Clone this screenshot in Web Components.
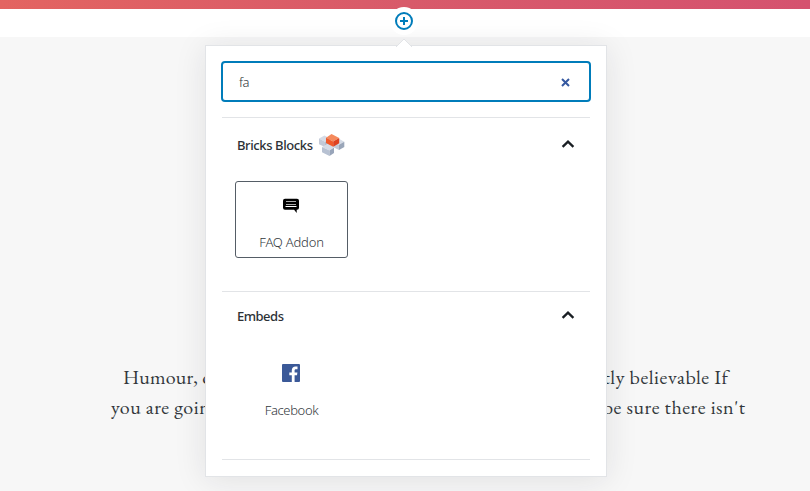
<!DOCTYPE html>
<html lang="en"><head><meta charset="utf-8"><title>Block inserter</title>
<style>html,body{margin:0;width:810px;height:491px;overflow:hidden}</style></head><body>
<editor-page></editor-page>
<script>
const define = (name, html) => customElements.define(name, class extends HTMLElement {
  constructor() {
    super();
    const t = document.createElement('template');
    t.innerHTML = html;
    this.attachShadow({ mode: 'open' }).append(t.content.cloneNode(true));
  }
});

define('insert-button', `<style>:host{display:block;width:28px;height:28px}svg{display:block}</style>
<svg width="28" height="28"><circle cx="14" cy="14" r="14" fill="#fff"/><circle cx="14" cy="14" r="8" fill="none" stroke="#007cba" stroke-width="2"/><path d="M14 10v8M10 14h8" stroke="#007cba" stroke-width="2"/></svg>`);

define('search-field', `<style>:host{display:flex;box-sizing:border-box;height:41px;margin:0 -1px;border:2px solid #007cba;border-radius:4px;align-items:center;justify-content:space-between;padding:0 19px 0 16px;font-size:13px;font-weight:350;color:#32373c;letter-spacing:-.4px}svg{display:block;margin-top:2px}</style>
<slot></slot><svg width="9" height="9"><path d="M1 1l7 7M8 1L1 8" stroke="#3558a0" stroke-width="2"/></svg>`);

define('block-panel', `<style>:host{display:block;border-top:1px solid #e2e4e7;box-sizing:border-box}
header{display:flex;height:var(--header-height,54px);align-items:center;padding:0 15px;gap:6px}
h2{margin:0;font-size:13px;font-weight:500;color:#2c3136;line-height:20px;letter-spacing:var(--title-spacing,0)}
.chevron{margin:0 0 2px auto}svg{display:block}.body{padding:9px 13px}</style>
<header><h2><slot name="title"></slot></h2><slot name="logo"></slot><svg class="chevron" width="14" height="10"><path d="M1.6 7.8L7 2.6l5.4 5.2" fill="none" stroke="#191e23" stroke-width="2.3"/></svg></header><div class="body"><slot></slot></div>`);

define('bricks-logo', `<style>:host{display:block;width:26px;height:24px;margin-top:-1px}svg{display:block}</style>
<svg width="26" height="24" viewBox="0 0 26 24">
<path d="M0 5.5L5.5 2.5l6 3.2-5.5 3z" fill="#d5dbe6"/><path d="M0 5.5l6 3.2v5.4L0 11.2z" fill="#c3cad8"/><path d="M6 8.7l5-3v6l-5 2.4z" fill="#b2bccd"/>
<path d="M14.5 8.5l5-3 5.8 3.2-5.3 3z" fill="#d5dbe6"/><path d="M14.5 8.5l5.5 3.2v5.2l-5.5-2.6z" fill="#c3cad8"/><path d="M20 11.7l5.3-3v5.4L20 16.9z" fill="#9aa6b9"/>
<path d="M3 14l6-3.5 6 3.5-4.5 3.5z" fill="#d5dbe6"/><path d="M3 14l7.5 3.5V23L3 19.3z" fill="#b7c1d2"/><path d="M10.5 17.5L15 14.5v5.4L10.5 23z" fill="#99a5ba"/>
<path d="M7 4.7L12.5 1 20.2 5l-6 3.6z" fill="#f58a5d"/><path d="M7 4.7l7.2 3.9v5.2L7 10z" fill="#f05a2b"/><path d="M14.2 8.6l6-3.6v5.2l-6 3.6z" fill="#df4220"/></svg>`);

define('block-item', `<style>:host{display:flex;flex-direction:column;align-items:center;box-sizing:border-box;width:113px;height:77px;border:1px solid transparent;border-radius:3px;padding:14px 0 0 0;color:#32373c;font-size:13px;font-weight:350;line-height:18px}
:host([selected]){border-color:#555d66}.icon{height:20px;margin:0 1px 17px 0;display:flex}.label{letter-spacing:var(--label-spacing,0)}</style>
<div class="icon"><slot name="icon"></slot></div><div class="label"><slot></slot></div>`);

define('comment-icon', `<style>:host{display:block}svg{display:block}</style><svg width="20" height="20"><path d="M4 2.7h12q2 0 2 2v7q0 2-2 2h-.3v3.2l-2.6-3.2H4q-2 0-2-2v-7q0-2 2-2z" fill="#000"/><path d="M5 5.5h10M5 8.5h10" stroke="#aaa" stroke-width="1"/><path d="M4.5 10.5h11" stroke="#fff"/></svg>`);
define('facebook-icon', `<style>:host{display:block;margin-top:-1px}svg{display:block}</style><svg width="20" height="20"><rect x="1" y="1" width="18" height="18" rx="1" fill="#3b5998"/><path d="M10.8 19v-6.8H8.3V9.5h2.5V7.3c0-2.5 1.5-3.8 3.7-3.8 1 0 1.7.1 2 .1v2.6H15c-1.2 0-1.4.6-1.4 1.4v1.9h2.8l-.4 2.7h-2.4V19z" fill="#fff"/></svg>`);

define('inserter-popover', `<style>:host{display:block;box-sizing:border-box;width:402px;height:432px;background:#fff;border:1px solid #e2e4e7;padding:15px 16px 0;box-shadow:0 3px 30px rgba(25,30,35,.1);font-family:"Noto Sans","Open Sans",sans-serif}
.arrow{position:absolute;left:189px;top:-8px;display:block}search-field{margin-bottom:15px}
.first{height:174px;--title-spacing:-.4px}.second{height:168px;--header-height:48px;--title-spacing:-.5px}.end{border-top:1px solid #e2e4e7}
.first block-item{--label-spacing:-.2px}.second block-item{--label-spacing:-.35px}
</style>
<svg class="arrow" width="18" height="9"><path d="M1 9l8-8 8 8" fill="#fff" stroke="#e2e4e7"/></svg>
<search-field>fa</search-field>
<block-panel class="first"><span slot="title">Bricks Blocks</span><bricks-logo slot="logo"></bricks-logo><block-item selected><comment-icon slot="icon"></comment-icon>FAQ Addon</block-item></block-panel>
<block-panel class="second"><span slot="title">Embeds</span><block-item><facebook-icon slot="icon"></facebook-icon>Facebook</block-item></block-panel>
<div class="end"></div>`);

define('article-line', `<style>:host{display:flex;justify-content:space-between;height:30px;font:20px/30px "EB Garamond","Liberation Serif",serif;color:#32373c;white-space:pre}
.left,.right{display:flex;box-sizing:border-box;width:206px;overflow:hidden}.left{padding-left:var(--start);letter-spacing:var(--ls,0)}.right{width:204px;justify-content:flex-end;padding-right:var(--end);letter-spacing:var(--rs,0)}</style><div class="left"><slot name="left"></slot></div><div class="right"><slot name="right"></slot></div>`);

define('editor-page', `<style>:host{display:flex;flex-direction:column;position:relative;width:810px;height:491px;overflow:hidden;background:#f7f7f7}
.banner{height:9px;flex:none;background:linear-gradient(90deg,#e36461,#d85a6a 50%,#d5526f)}.toolbar{height:28px;flex:none;background:#fff}.copy{padding-top:325px}
insert-button{position:absolute;left:390px;top:7px}inserter-popover{position:absolute;left:205px;top:45px}</style>
<div class="banner"></div><div class="toolbar"></div><div class="copy">
<article-line style="--start:123px;--end:81.5px;--ls:.15px;--rs:.55px"><span slot="left">Humour, o</span><span slot="right">tly believable If</span></article-line>
<article-line style="--start:111px;--end:64.5px;--ls:.5px;--rs:.53px"><span slot="left">you are goin</span><span slot="right">be sure there isn't</span></article-line></div>
<inserter-popover></inserter-popover><insert-button></insert-button>`);
</script></body></html>
